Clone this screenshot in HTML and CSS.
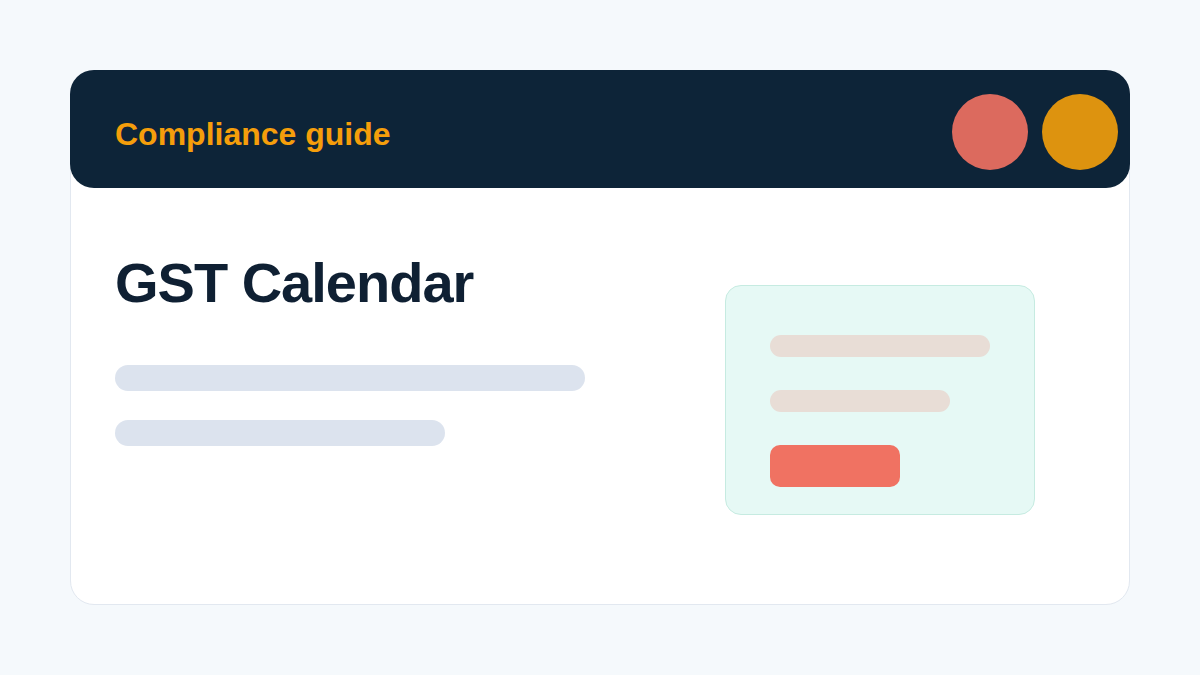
FILE: index.html
```html
<!DOCTYPE html>
<html lang="en">
<head>
<meta charset="utf-8">
<title>GST Calendar</title>
<link rel="stylesheet" href="styles.css">
</head>
<body>
<div class="page">
  <div class="card">
    <div class="header">
      <div class="brand">Compliance guide</div>
      <div class="dots">
        <span class="dot dot-red"></span>
        <span class="dot dot-amber"></span>
      </div>
    </div>
    <div class="content">
      <div class="main">
        <h1 class="title">GST Calendar</h1>
        <div class="bar bar-long"></div>
        <div class="bar bar-short"></div>
      </div>
      <div class="panel">
        <div class="line line-long"></div>
        <div class="line line-short"></div>
        <div class="btn"></div>
      </div>
    </div>
  </div>
</div>
</body>
</html>
```
FILE: styles.css
```css
html, body {
  margin: 0;
  padding: 0;
}
body {
  background: #f5f9fc;
  font-family: "Liberation Sans", Arial, sans-serif;
  width: 1200px;
  height: 675px;
  overflow: hidden;
}
.page {
  padding: 70px 70px 0 70px;
}
.card {
  box-sizing: border-box;
  width: 1060px;
  height: 535px;
  background: #ffffff;
  border: 1px solid #e2e8f0;
  border-radius: 24px;
}
.header {
  margin: -1px -1px 0 -1px;
  height: 118px;
  box-sizing: border-box;
  padding: 24px 12px 18px 45px;
  background: #0d2438;
  border-radius: 24px;
  display: flex;
  align-items: center;
  justify-content: space-between;
}
.brand {
  color: #f59e0b;
  font-size: 32px;
  font-weight: 700;
  line-height: 36px;
  padding-top: 4px;
}
.dots {
  display: flex;
  gap: 14px;
}
.dot {
  display: block;
  width: 76px;
  height: 76px;
  border-radius: 50%;
}
.dot-red { background: #dc6a5e; }
.dot-amber { background: #dd930f; }
.content {
  display: flex;
  justify-content: space-between;
  padding: 61px 94px 0 44px;
}
.main {
  display: flex;
  flex-direction: column;
}
.title {
  margin: 0;
  color: #0f2033;
  font-size: 56px;
  font-weight: 700;
  line-height: 67px;
  letter-spacing: -1px;
}
.bar {
  height: 26px;
  border-radius: 13px;
  background: #dce3ee;
}
.bar-long {
  width: 470px;
  margin-top: 49px;
}
.bar-short {
  width: 330px;
  margin-top: 29px;
}
.panel {
  box-sizing: border-box;
  width: 310px;
  height: 230px;
  margin-top: 36px;
  padding: 49px 44px 0 44px;
  background: #e6f9f5;
  border: 1px solid #c6ebe1;
  border-radius: 16px;
  display: flex;
  flex-direction: column;
}
.line {
  height: 22px;
  border-radius: 11px;
  background: #e8ddd6;
}
.line-long { width: 220px; }
.line-short { width: 180px; margin-top: 33px; }
.btn {
  width: 130px;
  height: 42px;
  margin-top: 33px;
  border-radius: 10px;
  background: #f07262;
}
```
